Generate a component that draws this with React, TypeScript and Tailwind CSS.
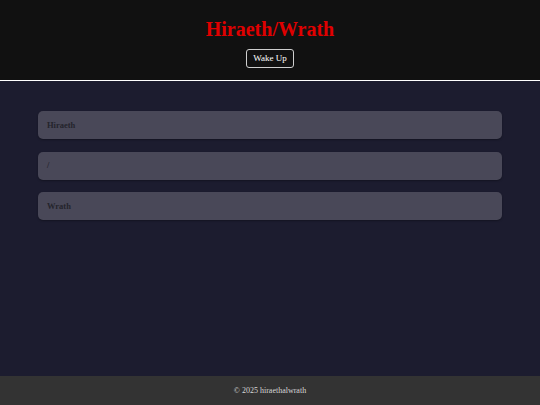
const items = ['Hiraeth', '/', 'Wrath']

export default function App() {
  return (
    <div className="flex h-[405px] flex-col bg-[#1c1c2f] font-['Liberation_Serif',serif]">
      <header className="flex h-[81px] flex-col items-center border-b border-white bg-[#111111] pt-[17px]">
        <h1 className="text-[20px] font-bold leading-[24px] text-[#e00000]">Hiraeth/Wrath</h1>
        <button className="mt-[8px] h-[19px] rounded-[3px] border border-[#cfcfcf] px-[6px] text-[9px] leading-none text-white">
          Wake Up
        </button>
      </header>
      <main className="flex flex-1 flex-col gap-[12.5px] px-[38px] pt-[30px]">
        {items.map((item) => (
          <div
            key={item}
            className="flex h-[28px] items-center rounded-[5px] bg-[#494858] px-[9px] text-[8.5px] font-bold text-[#24242c] shadow-[0_1px_2px_rgba(0,0,0,0.3)]"
          >
            {item}
          </div>
        ))}
      </main>
      <footer className="flex h-[29px] items-center justify-center bg-[#333333] text-[8px] text-[#d6d6d6]">
        <span className="text-[#d6d6d6]">© 2025 hiraethalwrath</span>
      </footer>
    </div>
  )
}
